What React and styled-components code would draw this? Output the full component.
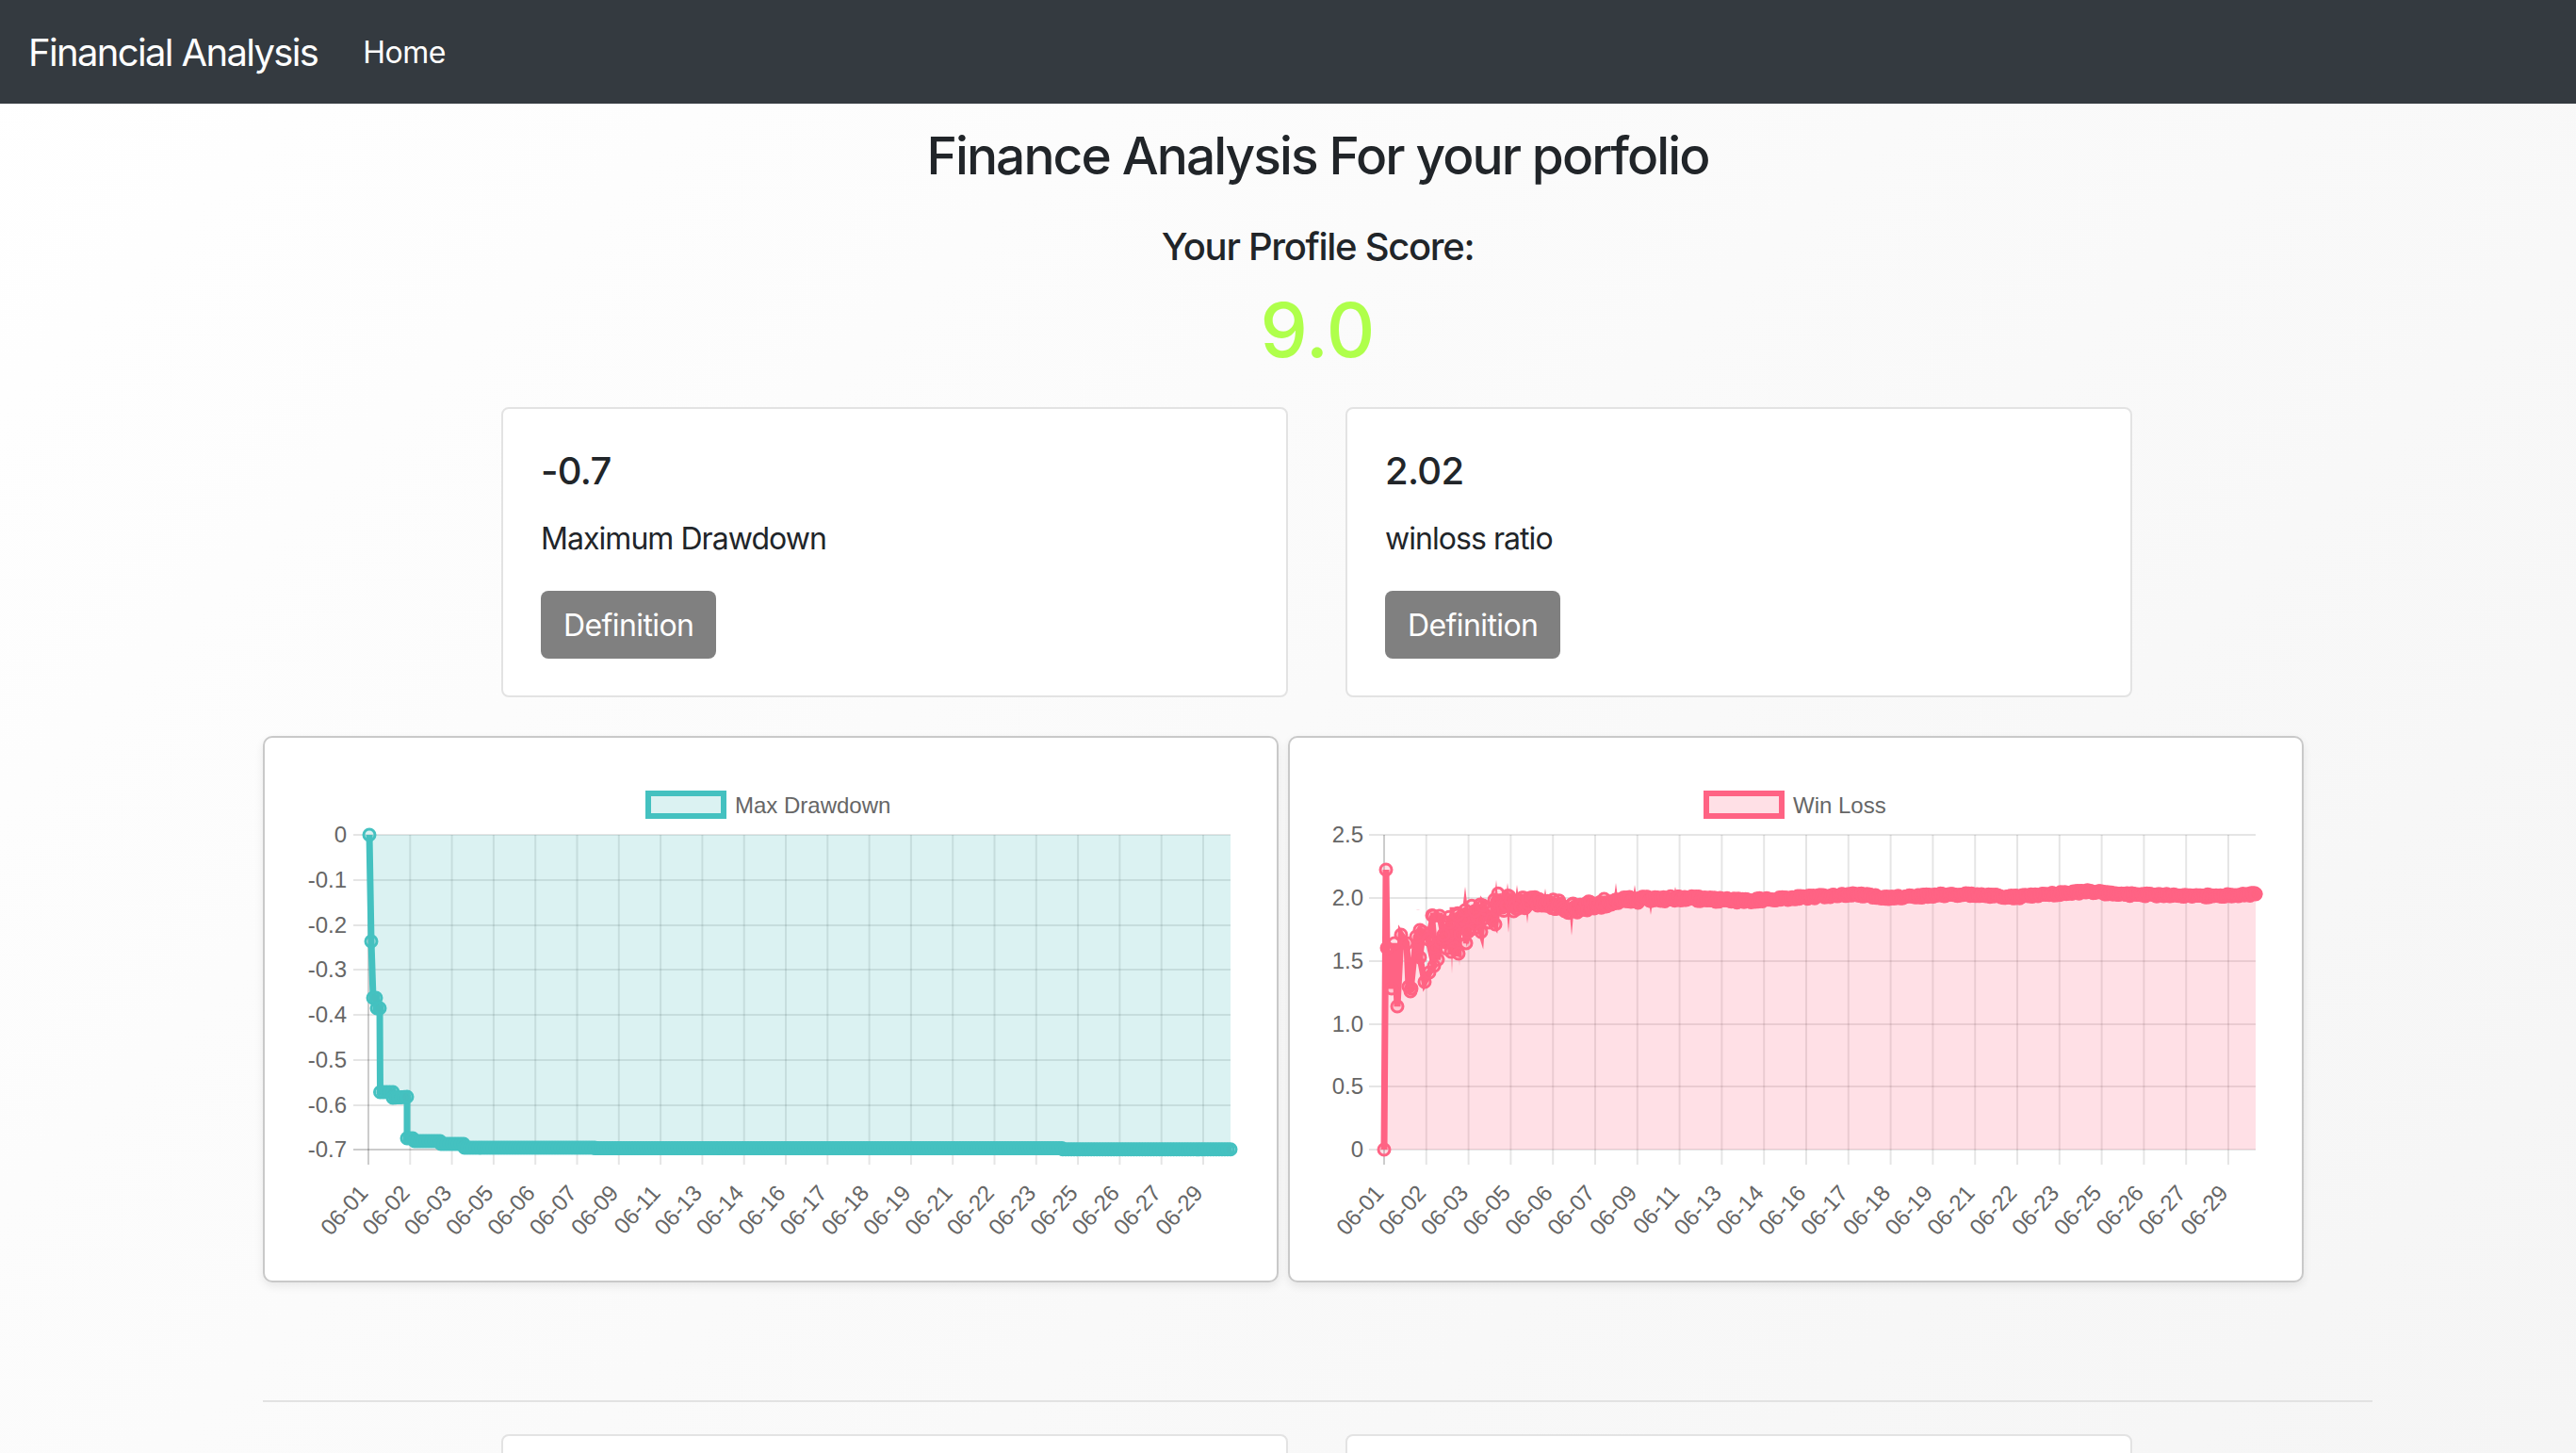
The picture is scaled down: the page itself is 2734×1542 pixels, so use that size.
import styled, { createGlobalStyle } from "styled-components";

const GlobalStyle = createGlobalStyle`
  html, body {
    margin: 0;
    height: 100%;
    overflow: hidden;
  }
  body {
    font-family: Inter, "Liberation Sans", sans-serif;
    color: #212529;
    background: linear-gradient(135deg, #ffffff 0%, #f5f5f5 100%);
  }
`;

const dates = [
  "06-01", "06-02", "06-03", "06-05", "06-06", "06-07", "06-09", "06-11", "06-13", "06-14", "06-16",
  "06-17", "06-18", "06-19", "06-21", "06-22", "06-23", "06-25", "06-26", "06-27", "06-29",
];

// small seeded random so the noisy band stays the same on every load
function makeRandom(seed) {
  let s = seed;
  return () => {
    s = (s * 16807) % 2147483647;
    return s / 2147483647;
  };
}

function densify(points, step) {
  const out = [];
  points.forEach((p, i) => {
    const next = points[i + 1];
    out.push(p);
    if (!next || Math.abs(next[1] - p[1]) > 8) return;
    const n = Math.floor((next[0] - p[0]) / step);
    for (let k = 1; k < n; k++) {
      const t = k / n;
      out.push([p[0] + (next[0] - p[0]) * t, p[1] + (next[1] - p[1]) * t]);
    }
  });
  return out;
}

function interpolate(table, x) {
  for (let i = 0; i < table.length - 1; i++) {
    const a = table[i];
    const b = table[i + 1];
    if (x <= b[0]) {
      const t = (x - a[0]) / (b[0] - a[0]);
      return a.slice(1).map((v, k) => v + (b[k + 1] - v) * t);
    }
  }
  return table[table.length - 1].slice(1);
}

const drawdownPoints = densify(
  [
    [392, 887], [394, 1000], [396, 1060], [399, 1060], [400, 1071], [403, 1071], [403.5, 1160], [417, 1160],
    [417, 1166], [432, 1165], [432, 1209], [438, 1209], [440, 1212], [467, 1212], [468, 1215], [492, 1215],
    [493, 1219], [631, 1219], [632, 1219.6], [1127, 1219.6], [1128, 1220.7], [1306, 1220.7],
  ],
  3
);

const winLossEarly = [
  [1469, 1221], [1471, 924], [1472, 1007], [1477, 1050], [1480, 1002], [1483, 1069], [1487, 993], [1493, 1002],
  [1495, 1048], [1498, 1050], [1497, 1053], [1503, 995], [1507, 988], [1510, 990], [1507, 1017], [1512, 1043],
  [1517, 1033], [1522, 1026], [1516, 998], [1521, 973], [1528, 973], [1532, 993], [1538, 980], [1540, 1011],
  [1548, 1013], [1547, 972], [1555, 967], [1558, 990], [1565, 968], [1572, 990], [1574, 962], [1587, 982], [1590, 960],
];

// top and bottom of the busy first days, the line bounces between them
const scatterEnvelope = [
  [1520, 972, 1030], [1548, 965, 1008], [1575, 958, 988], [1590, 952, 978],
];

function buildScatter() {
  const random = makeRandom(917);
  const out = [];
  for (let x = 1520; x <= 1590; x += 3) {
    const [high, low] = interpolate(scatterEnvelope, x);
    out.push([x, high + (low - high) * random()]);
  }
  return out;
}

const bandAnchors = [
  [1590, 960], [1628, 957], [1668, 965], [1717, 957], [1780, 954], [1851, 957], [1971, 950], [2003, 954],
  [2056, 951], [2083, 950], [2140, 953], [2216, 947], [2250, 950], [2333, 952], [2394, 950],
];

const bandY = (x) => interpolate(bandAnchors, x)[0];

function buildWinLossBand() {
  const random = makeRandom(4711);
  const out = [];
  for (let x = 1590; x <= 2394; x += 1.5) {
    const amp = 1.5 + 10 * Math.exp(-(x - 1590) / 90);
    out.push([x, bandY(x) + (random() - 0.5) * 2 * amp]);
  }
  out.push([2394, 950]);
  return out;
}

const winLossScatter = buildScatter();
const winLossBand = buildWinLossBand();
const winLossPoints = [...winLossScatter, ...winLossEarly, ...winLossBand];

// sharp miter tips of the line where the data jumps around
const winLossSpikes = [
  [1505, 967], [1555, 942], [1541, 1034], [1549, 1026], [1588, 935], [1600, 938], [1610, 940], [1601, 991],
  [1621, 981], [1668, 994], [1715, 938], [1735, 940], [1640, 944], [1778, 942], [1752, 972],
];

const toPath = (points) => points.map((p) => `${p[0].toFixed(1)},${p[1].toFixed(1)}`).join(" ");

const PlotText = styled.text`
  font-family: "Liberation Sans", Arial, sans-serif;
  font-size: 24px;
  fill: #666666;
`;

function Chart({ config }) {
  const { originX, left, right, gridRight, label, legendX, legendTextX, color, fill, ticks, labelRight, points, area, scatter, early, band, spikes } = config;
  const top = 887;
  const step = (gridRight - left) / 20;

  return (
    <svg width="100%" height="100%" viewBox={`${originX} 784 1074 576`} style={{ display: "block" }}>
      <rect x={legendX} y={843} width={80} height={24} fill={fill} stroke={color} strokeWidth="6" />
      <PlotText x={legendTextX} y={864}>{label}</PlotText>

      {ticks.map((t) => (
        <g key={t.label}>
          <line x1={left - 16} x2={right} y1={t.y} y2={t.y} stroke={t.zero ? "rgba(0,0,0,0.2)" : "rgba(0,0,0,0.1)"} strokeWidth="2" />
          <PlotText x={labelRight} y={t.y + 8} textAnchor="end">{t.label}</PlotText>
        </g>
      ))}

      {dates.map((d, i) => {
        const x = left + step * i;
        return (
          <g key={d}>
            <line x1={x} x2={x} y1={top} y2={1237} stroke={i === 0 ? "rgba(0,0,0,0.2)" : "rgba(0,0,0,0.1)"} strokeWidth="2" />
            <PlotText textAnchor="end" transform={`translate(${x + 1} 1268) rotate(-48)`}>{d}</PlotText>
          </g>
        );
      })}

      <polygon points={area} fill={fill} />
      {spikes.map((s) => (
        <polygon key={s.join()} points={`${s[0] - 2.5},${bandY(s[0])} ${s[0]},${s[1]} ${s[0] + 2.5},${bandY(s[0])}`} fill={color} />
      ))}
      {scatter && <polyline points={toPath(scatter)} fill="none" stroke={color} strokeWidth="6" strokeLinejoin="bevel" />}
      {early && <polyline points={toPath(early)} fill="none" stroke={color} strokeWidth="7" strokeLinejoin="miter" strokeMiterlimit="6" />}
      <polyline points={toPath(band)} fill="none" stroke={color} strokeWidth="7" strokeLinejoin="round" />
      {points.map((p, i) => (
        <circle key={i} cx={p[0]} cy={p[1]} r="6" fill={fill} stroke={color} strokeWidth="3" />
      ))}
    </svg>
  );
}

const drawdownChart = {
  originX: 281,
  left: 391,
  right: 1306,
  gridRight: 1277,
  label: "Max Drawdown",
  legendX: 688,
  legendTextX: 780,
  color: "#44c1c0",
  fill: "rgba(75,192,192,0.2)",
  labelRight: 368,
  ticks: [
    { label: "0", y: 887 }, { label: "-0.1", y: 935 }, { label: "-0.2", y: 983 }, { label: "-0.3", y: 1030 },
    { label: "-0.4", y: 1078 }, { label: "-0.5", y: 1126 }, { label: "-0.6", y: 1174 }, { label: "-0.7", y: 1221, zero: true },
  ],
  points: drawdownPoints,
  band: drawdownPoints,
  spikes: [],
  area: `${toPath(drawdownPoints)} 1306,887 391,887`,
};

const winLossChart = {
  originX: 1369,
  left: 1469,
  right: 2394,
  gridRight: 2365,
  label: "Win Loss",
  legendX: 1811,
  legendTextX: 1903,
  color: "#ff6384",
  fill: "rgba(255,99,132,0.2)",
  labelRight: 1447,
  ticks: [
    { label: "2.5", y: 887 }, { label: "2.0", y: 954 }, { label: "1.5", y: 1021 }, { label: "1.0", y: 1088 },
    { label: "0.5", y: 1154 }, { label: "0", y: 1221 },
  ],
  points: winLossPoints,
  scatter: winLossScatter,
  early: winLossEarly,
  band: winLossBand,
  spikes: winLossSpikes,
  area: `1469,1221 ${toPath(winLossEarly.slice(1).map((p) => [p[0], Math.min(p[1], 1050)]))} ${toPath(bandAnchors)} 2394,1221`,
};

function App() {
  return (
    <>
      <GlobalStyle />
      <Navbar>
        <Brand>Financial Analysis</Brand>
        <NavLink>Home</NavLink>
      </Navbar>
      <Main>
        <Title>Finance Analysis For your porfolio</Title>
        <ScoreLabel>Your Profile Score:</ScoreLabel>
        <Score>9.0</Score>
        <StatRow>
          <StatCard>
            <StatValue>-0.7</StatValue>
            <StatName>Maximum Drawdown</StatName>
            <DefinitionButton>Definition</DefinitionButton>
          </StatCard>
          <StatCard>
            <StatValue>2.02</StatValue>
            <StatName>winloss ratio</StatName>
            <DefinitionButton>Definition</DefinitionButton>
          </StatCard>
        </StatRow>
        <ChartRow>
          <ChartCard>
            <Chart config={drawdownChart} />
          </ChartCard>
          <ChartCard>
            <Chart config={winLossChart} />
          </ChartCard>
        </ChartRow>
        <Divider />
        <StatRow>
          <StatCard />
          <StatCard />
        </StatRow>
      </Main>
    </>
  );
}

const Navbar = styled.nav`
  height: 110px;
  background: #343a40;
  display: flex;
  align-items: center;
  padding: 0 30px;
  box-sizing: border-box;
  color: #ffffff;
`;

const Brand = styled.a`
  font-size: 40px;
  letter-spacing: -1.65px;
  margin-right: 48px;
`;

const NavLink = styled.a`
  font-size: 32px;
  letter-spacing: -0.5px;
`;

const Main = styled.main`
  width: 2239px;
  margin-left: 279px;
  display: flex;
  flex-direction: column;
`;

const Title = styled.h2`
  margin: 22px 0 0;
  font-size: 55px;
  line-height: 1.2;
  font-weight: 500;
  letter-spacing: -1.9px;
  text-align: center;
`;

const ScoreLabel = styled.h5`
  margin: 40px 0 0;
  font-size: 40px;
  line-height: 1.2;
  font-weight: 500;
  letter-spacing: -1.3px;
  text-align: center;
`;

const Score = styled.div`
  margin-top: 16px;
  font-size: 80px;
  line-height: 1.2;
  font-weight: 500;
  text-align: center;
  color: #afff4b;
`;

const StatRow = styled.div`
  display: flex;
  justify-content: center;
  gap: 61px;
  margin-top: 34px;
  padding-right: 2px;
`;

const StatCard = styled.div`
  width: 835px;
  height: 308px;
  box-sizing: border-box;
  padding: 42px 40px 40px 40px;
  background: #ffffff;
  border: 2px solid #e3e3e3;
  border-radius: 8px;
`;

const StatValue = styled.h5`
  margin: 0 0 24px;
  font-size: 40px;
  line-height: 1.2;
  font-weight: 500;
  letter-spacing: -0.7px;
`;

const StatName = styled.p`
  margin: 0 0 31px;
  font-size: 32px;
  line-height: 1.5;
  letter-spacing: -0.95px;
`;

const DefinitionButton = styled.button`
  display: block;
  height: 72px;
  padding: 0 24px;
  border: 0;
  border-radius: 8px;
  background: #808080;
  color: #ffffff;
  font-family: inherit;
  font-size: 32px;
  letter-spacing: -0.6px;
`;

const ChartRow = styled.div`
  display: flex;
  gap: 10px;
  margin-top: 41px;
`;

const ChartCard = styled.div`
  width: 1078px;
  height: 580px;
  box-sizing: border-box;
  background: #ffffff;
  border: 2px solid #c9c9c9;
  border-radius: 10px;
  box-shadow: 0 4px 10px rgba(0, 0, 0, 0.08);
`;

const Divider = styled.hr`
  width: 100%;
  margin: 125px 0 0;
  border: 0;
  border-top: 2px solid #e2e2e2;
`;

export default App;
